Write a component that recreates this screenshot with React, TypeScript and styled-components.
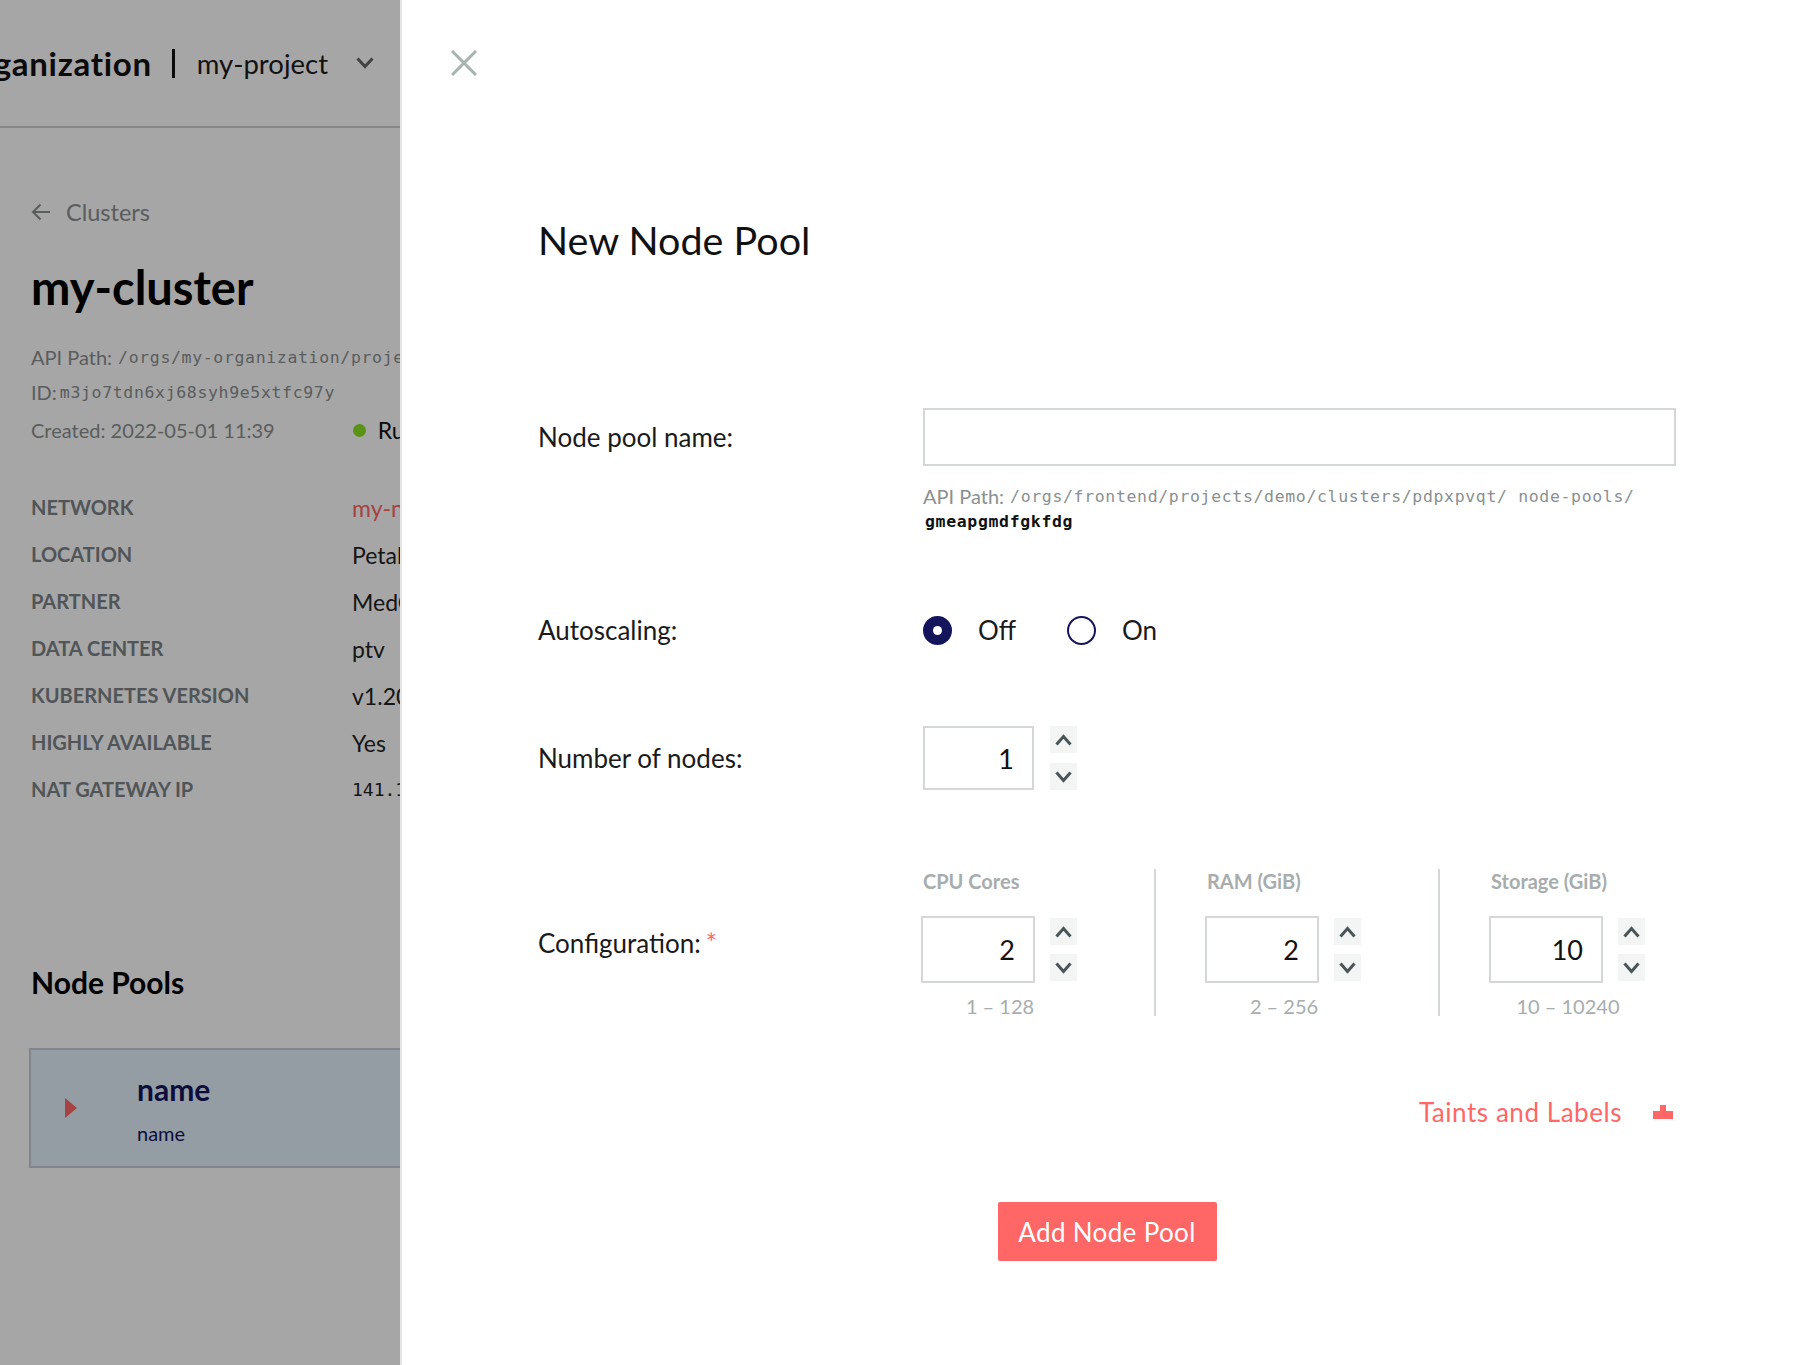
import React from "react";
import styled, { createGlobalStyle } from "styled-components";

const GlobalStyle = createGlobalStyle`
  html, body {
    margin: 0;
    height: 100%;
    background: #fff;
    font-family: "Lato", "Open Sans", sans-serif;
    color: #000;
  }
  * {
    box-sizing: border-box;
  }
`;

const MONO = `"DejaVu Sans Mono", "Liberation Mono", monospace`;

const Layout = styled.div`
  display: flex;
  width: 1820px;
  height: 1365px;
  overflow: hidden;
`;

/* page behind the drawer */
const BackPage = styled.div`
  position: relative;
  flex: 0 0 400px;
  width: 400px;
  overflow: hidden;
`;

const Backdrop = styled.div`
  position: absolute;
  inset: 0;
  background: rgba(0, 0, 0, 0.35);
`;

const TopBar = styled.header`
  display: flex;
  justify-content: flex-end;
  align-items: center;
  height: 128px;
  padding-right: 26px;
  border-bottom: 2px solid #cfcfcf;
  white-space: nowrap;

  & > * {
    flex-shrink: 0;
  }
`;

const OrgName = styled.span`
  font-size: 33px;
  font-weight: 700;
  letter-spacing: 0.7px;
  color: #111;
`;

const Pipe = styled.span`
  width: 3px;
  height: 29px;
  margin: 0 22px 0 20px;
  background: #111;
`;

const ProjectName = styled.span`
  font-size: 27.5px;
  color: #1c1c1c;
  margin-right: 28px;
`;

const Content = styled.div`
  padding: 0 0 0 31px;
`;

const BackLink = styled.div`
  display: flex;
  align-items: center;
  gap: 15px;
  margin-top: 68px;
  height: 32px;
  font-size: 23.5px;
  color: #8a9090;
`;

const ClusterTitle = styled.h1`
  margin: 31px 0 0;
  font-size: 47px;
  line-height: 56px;
  font-weight: 700;
  color: #000;
`;

const MetaLine = styled.div<{ $gap: number }>`
  display: flex;
  align-items: center;
  height: 32px;
  margin-top: ${(p) => p.$gap}px;
  font-size: 20px;
  color: #8a9090;
  white-space: nowrap;
`;

const Mono = styled.span<{ $left: number }>`
  font-family: ${MONO};
  font-size: 16.5px;
  letter-spacing: 0.65px;
  margin-left: ${(p) => p.$left}px;
`;

const StatusDot = styled.span`
  flex-shrink: 0;
  width: 13px;
  height: 13px;
  margin: 0 12px 0 78px;
  border-radius: 50%;
  background: #8ae020;
`;

const StatusText = styled.span`
  font-size: 23px;
  color: #111;
`;

const InfoGrid = styled.dl`
  display: grid;
  grid-template-columns: 321px 200px;
  grid-auto-rows: 47px;
  align-items: center;
  margin: 37px 0 0;
  font-size: 20px;
`;

const InfoKey = styled.dt`
  font-weight: 700;
  color: #7c8387;
  white-space: nowrap;
`;

const InfoValue = styled.dd<{ $link?: boolean; $mono?: boolean }>`
  margin: 2px 0 0;
  font-family: ${(p) => (p.$mono ? MONO : "inherit")};
  font-size: ${(p) => (p.$mono ? "18px" : "23px")};
  color: ${(p) => (p.$link ? "#ff6666" : "#222")};
  white-space: nowrap;
`;

const SectionTitle = styled.h2`
  margin: 151px 0 0;
  font-size: 30px;
  line-height: 38px;
  font-weight: 700;
  color: #000;
`;

const PoolCard = styled.div`
  display: flex;
  align-items: center;
  height: 120px;
  margin: 47px 0 0 -2px;
  width: 420px;
  padding-left: 34px;
  background: #e4f0fc;
  border: 2px solid #c3ccd4;
`;

const PoolArrow = styled.span`
  width: 0;
  height: 0;
  border-left: 12px solid #ff6666;
  border-top: 10px solid transparent;
  border-bottom: 10px solid transparent;
  margin-right: 60px;
`;

const PoolNames = styled.div`
  display: flex;
  flex-direction: column;
  gap: 13px;
  color: #15155c;
`;

const PoolName = styled.span`
  font-size: 30px;
  font-weight: 700;
  line-height: 36px;
`;

const PoolSub = styled.span`
  font-size: 20px;
  line-height: 26px;
`;

/* drawer */
const Drawer = styled.main`
  flex: 1;
  padding: 50px 144px 0 136px;
  border-left: 2px solid #e6e6e6;
`;

const CloseButton = styled.button`
  display: block;
  width: 26px;
  height: 26px;
  margin-left: -87px;
  padding: 0;
  border: 0;
  background: none;
  color: #a7b3b0;
`;

const DrawerTitle = styled.h2`
  margin: 142px 0 0;
  font-size: 39.5px;
  line-height: 44px;
  font-weight: 400;
  color: #111;
`;

const FormRow = styled.div<{ $top: number }>`
  display: grid;
  grid-template-columns: 385px minmax(0, 1fr);
  align-items: center;
  margin-top: ${(p) => p.$top}px;
`;

const FieldLabel = styled.label`
  font-size: 26px;
  color: #1a1a1a;
`;

const Required = styled.span`
  color: #ff6666;
  margin-left: 5px;
`;

const TextInput = styled.input`
  display: block;
  width: 100%;
  height: 58px;
  border: 2px solid #d3d7d7;
  background: #fff;
  outline: none;
`;

const PathHint = styled.div`
  margin: 17px 0 0 385px;
  font-size: 20px;
  line-height: 26px;
  color: #8a9090;
`;

const PathMono = styled.span`
  font-family: ${MONO};
  font-size: 16.5px;
  line-height: 1;
  letter-spacing: 0.65px;
  margin-left: 6px;
  vertical-align: 2px;
`;

const PathName = styled.div`
  height: 26px;
  font-family: ${MONO};
  font-size: 16.5px;
  font-weight: 700;
  line-height: 26px;
  letter-spacing: 0.65px;
  margin-left: 2px;
  color: #111;
`;

const RadioGroup = styled.div`
  display: flex;
  align-items: center;
  height: 29px;
`;

const RadioOption = styled.label`
  display: flex;
  align-items: center;
  gap: 26px;
  margin-right: 51px;
  font-size: 26px;
  color: #1a1a1a;
`;

const RadioMark = styled.span<{ $on?: boolean }>`
  display: flex;
  align-items: center;
  justify-content: center;
  width: 29px;
  height: 29px;
  border-radius: 50%;
  border: 2px solid #15155c;
  background: ${(p) => (p.$on ? "#15155c" : "#fff")};

  &::after {
    content: "";
    width: 9px;
    height: 9px;
    border-radius: 50%;
    background: ${(p) => (p.$on ? "#fff" : "transparent")};
  }
`;

const NumberField = styled.div<{ $offset?: number; $gap: number }>`
  display: flex;
  align-items: center;
  gap: ${(p) => p.$gap}px;
  margin-left: ${(p) => p.$offset ?? 0}px;
`;

const NumberInput = styled.input<{ $w: number; $h: number }>`
  width: ${(p) => p.$w}px;
  height: ${(p) => p.$h}px;
  padding: 0 18px 0 0;
  border: 2px solid #d3d7d7;
  background: #fff;
  outline: none;
  font-family: inherit;
  font-size: 27px;
  text-align: right;
  color: #111;
`;

const Stepper = styled.div<{ $gap: number }>`
  display: flex;
  flex-direction: column;
  gap: ${(p) => p.$gap}px;
`;

const StepButton = styled.button`
  display: flex;
  align-items: center;
  justify-content: center;
  width: 27px;
  height: 27px;
  padding: 0;
  border: 0;
  background: #f3f5f5;
  color: #4a5558;
`;

const ConfigColumns = styled.div`
  display: flex;
  height: 147px;
`;

const ConfigColumn = styled.div<{ $first?: boolean; $last?: boolean }>`
  flex: 0 0 auto;
  width: ${(p) => (p.$first ? "233px" : p.$last ? "233px" : "284px")};
  padding-left: ${(p) => (p.$first ? "0" : "51px")};
  border-right: ${(p) => (p.$last ? "0" : "2px solid #d3d7d7")};
`;

const ConfigHead = styled.div`
  margin-bottom: 23px;
  font-size: 20px;
  font-weight: 700;
  line-height: 24px;
  color: #a7adad;
`;

const ConfigRange = styled.div`
  width: 158px;
  margin: 13px 0 0 -2px;
  font-size: 20px;
  line-height: 21px;
  text-align: center;
  color: #a7adad;
`;

const TaintsRow = styled.div`
  display: flex;
  justify-content: flex-end;
  align-items: center;
  gap: 31px;
  height: 32px;
  margin-top: 80px;
  padding-right: 3px;
  font-size: 26px;
  letter-spacing: 0.55px;
  color: #ff6666;
`;

const SubmitRow = styled.div`
  display: flex;
  justify-content: center;
  margin-top: 74px;
`;

const SubmitButton = styled.button`
  width: 219px;
  height: 59px;
  padding: 0;
  border: 0;
  border-radius: 2px;
  background: #ff6666;
  color: #fff;
  font-family: inherit;
  font-size: 26px;
  letter-spacing: 0.35px;
`;

const Chevron = ({ up }: { up?: boolean }) => (
  <svg width="17" height="12" viewBox="0 0 17 12" fill="none" stroke="currentColor" strokeWidth="3">
    <polyline points={up ? "1.5,10.5 8.5,2.5 15.5,10.5" : "1.5,1.5 8.5,9.5 15.5,1.5"} />
  </svg>
);

const StepperControl = ({ gap }: { gap: number }) => (
  <Stepper $gap={gap}>
    <StepButton type="button">
      <Chevron up />
    </StepButton>
    <StepButton type="button">
      <Chevron />
    </StepButton>
  </Stepper>
);

const infoRows = [
  { key: "NETWORK", value: "my-network", link: true },
  { key: "LOCATION", value: "Petaluma" },
  { key: "PARTNER", value: "MedOne" },
  { key: "DATA CENTER", value: "ptv" },
  { key: "KUBERNETES VERSION", value: "v1.20.7" },
  { key: "HIGHLY AVAILABLE", value: "Yes" },
  { key: "NAT GATEWAY IP", value: "141.193.36.11", mono: true },
];

const configColumns = [
  { head: "CPU Cores", value: 2, range: "1 – 128" },
  { head: "RAM (GiB)", value: 2, range: "2 – 256" },
  { head: "Storage (GiB)", value: 10, range: "10 – 10240" },
];

export default function App() {
  return (
    <>
      <GlobalStyle />
      <Layout>
        <BackPage>
          <TopBar>
            <OrgName>my-organization</OrgName>
            <Pipe />
            <ProjectName>my-project</ProjectName>
            <svg width="18" height="12" viewBox="0 0 18 12" fill="none" stroke="#666" strokeWidth="3">
              <polyline points="1.5,1.5 9,9.5 16.5,1.5" />
            </svg>
          </TopBar>
          <Content>
            <BackLink>
              <svg width="20" height="18" viewBox="0 0 20 18" fill="none" stroke="#8a9090" strokeWidth="2">
                <path d="M19 9H2M9.5 1.5 2 9l7.5 7.5" />
              </svg>
              Clusters
            </BackLink>
            <ClusterTitle>my-cluster</ClusterTitle>
            <MetaLine $gap={26}>
              API Path:<Mono $left={6}>/orgs/my-organization/projects/my-project/clusters</Mono>
            </MetaLine>
            <MetaLine $gap={3}>
              ID:<Mono $left={3}>m3jo7tdn6xj68syh9e5xtfc97y</Mono>
            </MetaLine>
            <MetaLine $gap={6}>
              Created: 2022-05-01 11:39
              <StatusDot />
              <StatusText>Running</StatusText>
            </MetaLine>
            <InfoGrid>
              {infoRows.map((row) => (
                <React.Fragment key={row.key}>
                  <InfoKey>{row.key}</InfoKey>
                  <InfoValue $link={row.link} $mono={row.mono}>
                    {row.value}
                  </InfoValue>
                </React.Fragment>
              ))}
            </InfoGrid>
            <SectionTitle>Node Pools</SectionTitle>
            <PoolCard>
              <PoolArrow />
              <PoolNames>
                <PoolName>name</PoolName>
                <PoolSub>name</PoolSub>
              </PoolNames>
            </PoolCard>
          </Content>
          <Backdrop />
        </BackPage>

        <Drawer>
          <CloseButton type="button" aria-label="Close">
            <svg width="26" height="26" viewBox="0 0 26 26" fill="none" stroke="currentColor" strokeWidth="3">
              <path d="M1 1l24 24M25 1 1 25" />
            </svg>
          </CloseButton>
          <DrawerTitle>New Node Pool</DrawerTitle>

          <FormRow $top={146}>
            <FieldLabel>Node pool name:</FieldLabel>
            <TextInput type="text" />
          </FormRow>
          <PathHint>
            API Path:<PathMono>/orgs/frontend/projects/demo/clusters/pdpxpvqt/ node-pools/</PathMono>
            <PathName>gmeapgmdfgkfdg</PathName>
          </PathHint>

          <FormRow $top={79}>
            <FieldLabel>Autoscaling:</FieldLabel>
            <RadioGroup>
              <RadioOption>
                <RadioMark $on />
                Off
              </RadioOption>
              <RadioOption>
                <RadioMark />
                On
              </RadioOption>
            </RadioGroup>
          </FormRow>

          <FormRow $top={80}>
            <FieldLabel>Number of nodes:</FieldLabel>
            <NumberField $gap={16}>
              <NumberInput $w={111} $h={64} defaultValue={1} />
              <StepperControl gap={10} />
            </NumberField>
          </FormRow>

          <FormRow $top={79}>
            <FieldLabel>
              Configuration:<Required>*</Required>
            </FieldLabel>
            <ConfigColumns>
              {configColumns.map((col, i) => (
                <ConfigColumn key={col.head} $first={i === 0} $last={i === 2}>
                  <ConfigHead>{col.head}</ConfigHead>
                  <NumberField $offset={-2} $gap={15}>
                    <NumberInput $w={114} $h={67} defaultValue={col.value} />
                    <StepperControl gap={9} />
                  </NumberField>
                  <ConfigRange>{col.range}</ConfigRange>
                </ConfigColumn>
              ))}
            </ConfigColumns>
          </FormRow>

          <TaintsRow>
            Taints and Labels
            <svg width="20" height="14" viewBox="0 0 20 14" fill="#ff6666">
              <path d="M7 0h6v6h7v8H0V6h7z" />
            </svg>
          </TaintsRow>

          <SubmitRow>
            <SubmitButton type="button">Add Node Pool</SubmitButton>
          </SubmitRow>
        </Drawer>
      </Layout>
    </>
  );
}
